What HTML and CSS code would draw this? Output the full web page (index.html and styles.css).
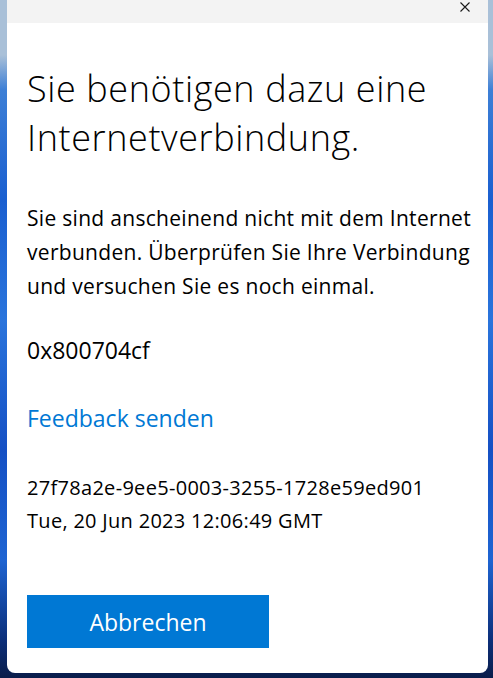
FILE: index.html
```
<!DOCTYPE html>
<html lang="de">
<head>
<meta charset="utf-8">
<title>Internetverbindung</title>
<link rel="stylesheet" href="styles.css">
</head>
<body>
<div class="dialog">
  <div class="titlebar">
    <button class="close" aria-label="Schließen">
      <svg width="10" height="10" viewBox="0 0 10 10"><path d="M0.5 0.5 L9.5 9.5 M9.5 0.5 L0.5 9.5" stroke="#1a1a1a" stroke-width="1.1" fill="none"/></svg>
    </button>
  </div>
  <div class="content">
    <h1 class="title">Sie benötigen dazu eine<br>Internetverbindung.</h1>
    <p class="message">Sie sind anscheinend nicht mit dem Internet<br>verbunden. Überprüfen Sie Ihre Verbindung<br>und versuchen Sie es noch einmal.</p>
    <p class="code">0x800704cf</p>
    <a class="link" href="#">Feedback senden</a>
    <p class="meta">27f78a2e-9ee5-0003-3255-1728e59ed901<br>Tue, 20 Jun 2023 12:06:49 GMT</p>
    <button class="primary">Abbrechen</button>
  </div>
</div>
</body>
</html>
```
FILE: styles.css
```
html, body {
  margin: 0;
  padding: 0;
  height: 100%;
}
body {
  background:
    linear-gradient(180deg, #a9c0d8 0, #a9c0d8 55px, #3d7fd6 90px, #1a5fd0 200px, #2a74dc 320px, #1550c4 450px, #1e64d2 560px, #0c2f7a 640px, #0a1d4a 678px);
  overflow: hidden;
  font-family: "Open Sans", "Noto Sans", sans-serif;
  color: #000;
}
.dialog {
  margin-left: 7px;
  width: 481px;
  height: 673px;
  background: #fff;
  border-radius: 0 0 8px 8px;
  overflow: hidden;
  display: flex;
  flex-direction: column;
}
.titlebar {
  height: 23px;
  background: #f3f3f3;
  display: flex;
  justify-content: flex-end;
  flex-shrink: 0;
}
.close {
  width: 46px;
  height: 14px;
  border: 0;
  padding: 0;
  background: transparent;
  display: flex;
  align-items: center;
  justify-content: center;
}
.content {
  padding-left: 20px;
  white-space: nowrap;
}
.title {
  margin: 41px 0 0;
  font-size: 36px;
  line-height: 49px;
  font-weight: 300;
  letter-spacing: 0.6px;
}
.message {
  margin: 39px 0 0;
  font-size: 21px;
  line-height: 34px;
  letter-spacing: 0.3px;
}
.code {
  margin: 32px 0 0;
  font-size: 23px;
  line-height: 30px;
}
.link {
  display: block;
  margin-top: 38px;
  font-size: 23px;
  line-height: 30px;
  color: #0078d4;
  text-decoration: none;
}
.meta {
  margin: 38px 0 0;
  font-size: 20px;
  line-height: 33px;
  letter-spacing: 0.3px;
}
.primary {
  display: block;
  margin-top: 58px;
  width: 242px;
  height: 53px;
  border: 0;
  background: #0078d4;
  color: #fff;
  font-family: inherit;
  font-size: 23px;
  padding: 0;
}
```
